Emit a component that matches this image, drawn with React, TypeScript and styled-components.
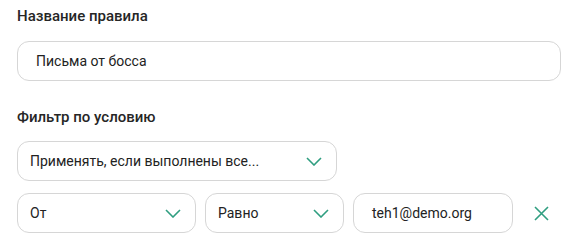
import React from "react";
import styled, { createGlobalStyle } from "styled-components";

const GlobalStyle = createGlobalStyle`
  body {
    margin: 0;
    background: #ffffff;
    font-family: Roboto, "Noto Sans", sans-serif;
    color: #222222;
  }
`;

const accent = "#2f9e80";

const Page = styled.div`
  padding: 6px 9px 0 17px;
  display: flex;
  flex-direction: column;
`;

const Label = styled.div<{ $mb?: number }>`
  font-size: 15px;
  font-weight: 500;
  line-height: 20px;
  color: #262626;
  margin-bottom: ${({ $mb }) => $mb ?? 15}px;
`;

const TextField = styled.div<{ $width: number }>`
  box-sizing: border-box;
  width: ${({ $width }) => $width}px;
  height: 40px;
  border: 1px solid #d6d6d6;
  border-radius: 12px;
  padding-left: 18px;
  display: flex;
  align-items: center;
  font-size: 14px;
  color: #222222;
  background: #fff;
`;

const Select = styled.div<{ $width: number }>`
  box-sizing: border-box;
  width: ${({ $width }) => $width}px;
  height: 40px;
  border: 1px solid #d6d6d6;
  border-radius: 12px;
  padding: 0 14px 0 12px;
  display: flex;
  align-items: center;
  justify-content: space-between;
  font-size: 14px;
  color: #222222;
  background: #fff;
`;

const Section = styled.div`
  margin-bottom: 26px;
`;

const Row = styled.div`
  display: flex;
  align-items: center;
  gap: 9px;
  margin-top: 12px;
`;

const RemoveButton = styled.button`
  border: none;
  background: none;
  padding: 0;
  margin-left: 11px;
  width: 16px;
  height: 16px;
  display: flex;
  align-items: center;
  justify-content: center;
  cursor: pointer;
`;

const Chevron = () => (
  <svg width="16" height="9" viewBox="0 0 16 9" fill="none">
    <path d="M1 1L8 8L15 1" stroke={accent} strokeWidth="1.6" />
  </svg>
);

const CloseIcon = () => (
  <svg width="15" height="15" viewBox="0 0 15 15" fill="none">
    <path d="M1 1L14 14M14 1L1 14" stroke={accent} strokeWidth="1.6" />
  </svg>
);

const App = () => {
  return (
    <>
      <GlobalStyle />
      <Page>
        <Section>
          <Label>Название правила</Label>
          <TextField $width={544}>Письма от босса</TextField>
        </Section>
        <Label $mb={14}>Фильтр по условию</Label>
        <Select $width={320}>
          <span>Применять, если выполнены все...</span>
          <Chevron />
        </Select>
        <Row>
          <Select $width={179}>
            <span>От</span>
            <Chevron />
          </Select>
          <Select $width={139}>
            <span>Равно</span>
            <Chevron />
          </Select>
          <TextField $width={160}>teh1@demo.org</TextField>
          <RemoveButton>
            <CloseIcon />
          </RemoveButton>
        </Row>
      </Page>
    </>
  );
};

export default App;
